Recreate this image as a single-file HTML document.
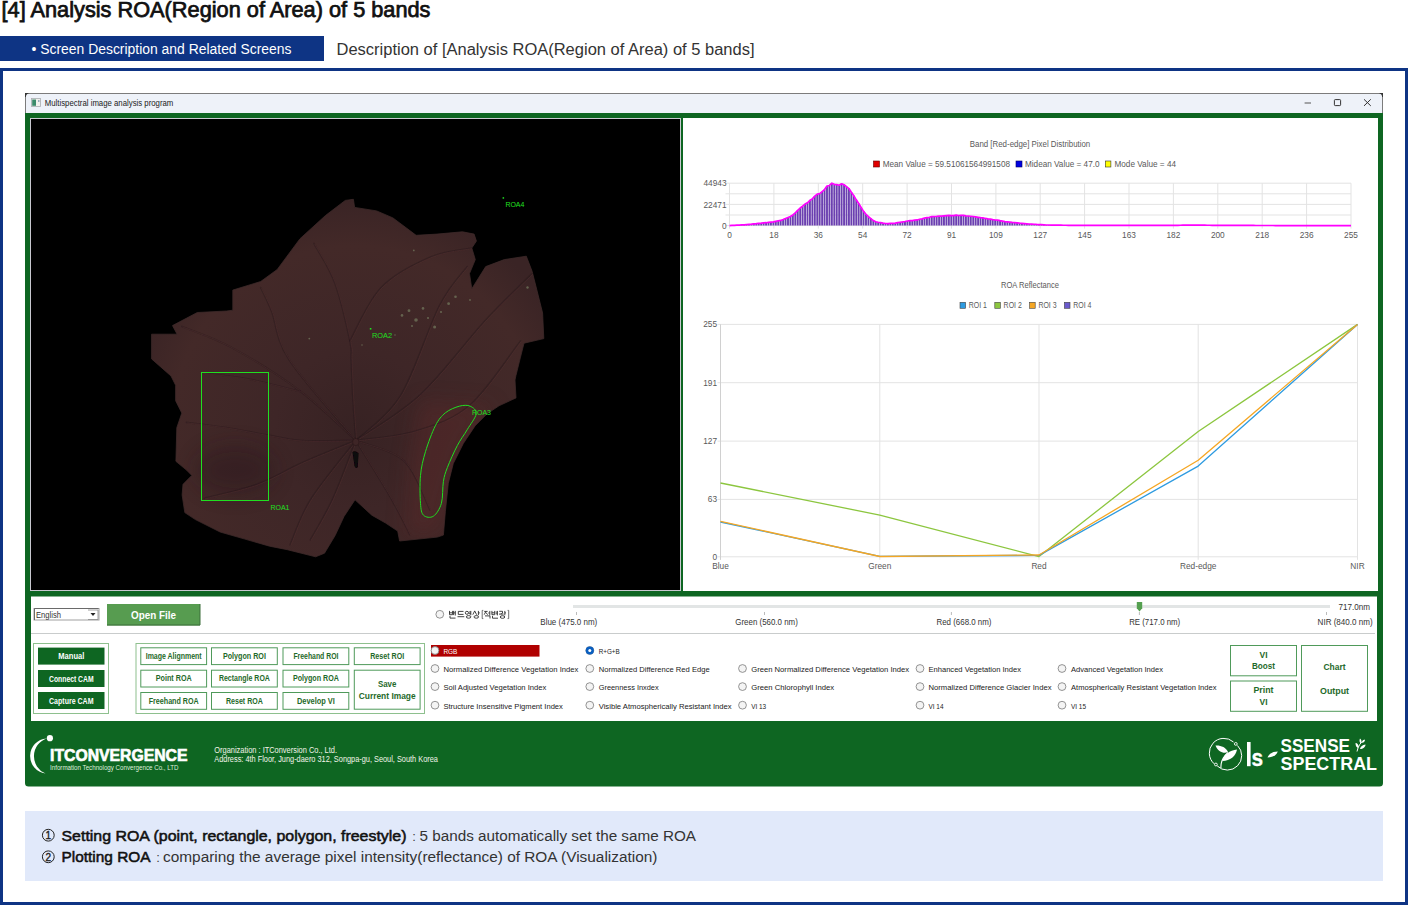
<!DOCTYPE html><html><head><meta charset="utf-8"><style>*{margin:0;padding:0}html,body{width:1408px;height:905px;overflow:hidden;background:#fff}svg{position:absolute;left:0;top:0;display:block}text{font-family:"Liberation Sans",sans-serif}</style></head><body><svg width="1408" height="905" viewBox="0 0 1408 905"><text x="1.5" y="17.3" font-size="21.5" fill="#111" textLength="429" lengthAdjust="spacingAndGlyphs" stroke="#111" stroke-width="0.75">[4] Analysis ROA(Region of Area) of 5 bands</text>
<rect x="0" y="36" width="324" height="25" fill="#0e3484"/>
<text x="31.5" y="53.9" font-size="13.8" fill="#fff" textLength="260" lengthAdjust="spacingAndGlyphs">• Screen Description and Related Screens</text>
<text x="336.5" y="54.7" font-size="16" fill="#333" textLength="418" lengthAdjust="spacingAndGlyphs">Description of [Analysis ROA(Region of Area) of 5 bands]</text>
<rect x="1.5" y="69.5" width="1405" height="834" fill="none" stroke="#0e3484" stroke-width="3"/>
<path d="M25,113 L25,96 Q25,93 28,93 L1380,93 Q1383,93 1383,96 L1383,113 Z" fill="#eef2f9"/>
<path d="M25.5,125 L25.5,93.5 L1382.5,93.5 L1382.5,113" fill="none" stroke="#7c7c7c" stroke-width="1"/>
<path d="M25,93 L29,93 Q26,94 25.8,97 L25,97 Z M1383,93 L1379,93 Q1382,94 1382.2,97 L1383,97 Z" fill="#333"/>
<path d="M25,113 L1383,113 L1383,783 Q1383,786.5 1379.5,786.5 L28.5,786.5 Q25,786.5 25,783 Z" fill="#0e6622"/>
<rect x="31.5" y="98.5" width="9" height="8" fill="#f0f0ec" stroke="#a8acb0" stroke-width="0.8"/>
<rect x="32.2" y="99.5" width="3.8" height="6.3" fill="#3a8a6a"/>
<rect x="38" y="100" width="1.5" height="2" fill="#9ab"/>
<text x="44.8" y="106" font-size="8.6" fill="#1a1a1a" textLength="128.5" lengthAdjust="spacingAndGlyphs">Multispectral image analysis program</text>
<line x1="1304.6" y1="103" x2="1311" y2="103" stroke="#555" stroke-width="1"/>
<rect x="1334.4" y="99.6" width="6.2" height="6" rx="0.8" fill="none" stroke="#333" stroke-width="1"/>
<path d="M1364,99.3 L1370.8,105.9 M1370.8,99.3 L1364,105.9" stroke="#333" stroke-width="1"/>
<rect x="30.5" y="118.5" width="650" height="472" fill="#000" stroke="#c8c8d0" stroke-width="1"/>
<defs><radialGradient id="lg" cx="355" cy="430" r="230" gradientUnits="userSpaceOnUse"><stop offset="0" stop-color="#372223"/><stop offset="0.35" stop-color="#3e2627"/><stop offset="0.8" stop-color="#432928"/><stop offset="1" stop-color="#3a2425"/></radialGradient><linearGradient id="rg" x1="0" y1="0" x2="1" y2="0"><stop offset="0" stop-color="#5a2a2a" stop-opacity="0"/><stop offset="1" stop-color="#6a2e2c" stop-opacity="0.55"/></linearGradient><filter id="bl" x="-50%" y="-50%" width="200%" height="200%"><feGaussianBlur stdDeviation="10"/></filter><filter id="bl2"><feGaussianBlur stdDeviation="0.35"/></filter><clipPath id="imgclip"><rect x="31" y="119" width="649" height="471"/></clipPath><clipPath id="leafclip"><polygon points="345.3,200.4 353.4,199.3 354.6,207.4 376.6,210.9 392.9,217.9 406.8,228.3 416.1,235.3 437,234.1 462.5,231.8 474.1,234.1 476.4,241.1 471.8,248 475.3,259.6 469.5,273.6 471.8,288.7 485.7,266.6 504.3,259.6 526.3,256.2 532.1,271.3 536.8,289.8 542.6,313 543.8,338.6 524,343.2 520.5,357.1 515.9,375.7 515,380 516,397.9 499,405.8 487.1,413.8 475.2,425.7 463.3,443.6 453.3,463.5 448.3,483.4 445.4,511.2 443.4,535.1 437.4,537.1 399.6,541 397.7,531.1 385.7,523.1 371.8,515.2 355,499.8 344,516.5 335.1,535.6 324.5,553.2 315.6,556.8 287.3,549.7 269.6,546.2 244.9,539.1 220.1,532 195.4,519.6 184.8,512.6 182.1,494.9 183,484.3 191.8,475.4 186.5,470.1 175.9,461.3 176.8,427.7 181.8,413.1 175.6,400.7 175.6,385.2 171,376 151.6,358.9 151.6,334.2 177.1,334.2 172.5,325.6 197.3,312.5 226.7,311 232.8,310.2 232.8,290.1 260.7,281.5 277.2,269.5 300,238.7 325.5,215.5"/></clipPath></defs>
<g clip-path="url(#imgclip)">
<polygon points="345.3,200.4 353.4,199.3 354.6,207.4 376.6,210.9 392.9,217.9 406.8,228.3 416.1,235.3 437,234.1 462.5,231.8 474.1,234.1 476.4,241.1 471.8,248 475.3,259.6 469.5,273.6 471.8,288.7 485.7,266.6 504.3,259.6 526.3,256.2 532.1,271.3 536.8,289.8 542.6,313 543.8,338.6 524,343.2 520.5,357.1 515.9,375.7 515,380 516,397.9 499,405.8 487.1,413.8 475.2,425.7 463.3,443.6 453.3,463.5 448.3,483.4 445.4,511.2 443.4,535.1 437.4,537.1 399.6,541 397.7,531.1 385.7,523.1 371.8,515.2 355,499.8 344,516.5 335.1,535.6 324.5,553.2 315.6,556.8 287.3,549.7 269.6,546.2 244.9,539.1 220.1,532 195.4,519.6 184.8,512.6 182.1,494.9 183,484.3 191.8,475.4 186.5,470.1 175.9,461.3 176.8,427.7 181.8,413.1 175.6,400.7 175.6,385.2 171,376 151.6,358.9 151.6,334.2 177.1,334.2 172.5,325.6 197.3,312.5 226.7,311 232.8,310.2 232.8,290.1 260.7,281.5 277.2,269.5 300,238.7 325.5,215.5" fill="url(#lg)" stroke="#3e2a2a" stroke-width="0.8"/>
<g clip-path="url(#leafclip)">
<path d="M420,400 L495,405 L465,445 L448,500 L440,535 L405,535 L410,460 Z" fill="#632b2b" opacity="0.35" filter="url(#bl)"/>
<ellipse cx="235" cy="470" rx="40" ry="25" fill="#2a181a" opacity="0.4" filter="url(#bl)"/>
<path d="M355.8,440.5 C355.3,433.8 353.8,413.4 353.0,400.0 C352.2,386.6 351.7,369.9 351.2,360.0 C350.7,350.1 352.6,353.8 349.9,340.9 C347.2,328.0 340.8,299.1 334.8,282.9 C328.8,266.6 317.4,250.0 313.9,243.4" fill="none" stroke="#24151a" stroke-width="1.6" opacity="0.38" stroke-linecap="round" filter="url(#bl2)"/>
<path d="M356.6,441.0 C356.1,434.2 354.6,413.9 353.8,400.5 C353.0,387.1 352.5,370.4 352.0,360.5 C351.5,350.6 353.4,354.2 350.7,341.4 C348.0,328.5 341.6,299.6 335.6,283.4 C329.6,267.1 318.2,250.5 314.7,243.9" fill="none" stroke="#64383a" stroke-width="0.7" opacity="0.45" stroke-linejoin="round"/>
<path d="M349.9,340.9 C355.1,332.0 367.8,301.4 381.2,287.5 C394.6,273.6 414.9,263.9 430.0,257.3 C445.1,250.7 464.8,249.6 471.8,248.0" fill="none" stroke="#24151a" stroke-width="1.6" opacity="0.38" stroke-linecap="round" filter="url(#bl2)"/>
<path d="M350.7,341.4 C355.9,332.5 368.6,301.9 382.0,288.0 C395.4,274.1 415.7,264.4 430.8,257.8 C445.9,251.2 465.6,250.1 472.6,248.5" fill="none" stroke="#64383a" stroke-width="0.7" opacity="0.45" stroke-linejoin="round"/>
<path d="M355.8,440.5 C363.3,433.0 386.7,418.0 400.6,395.6 C414.5,373.2 428.2,327.5 439.3,306.0 C450.4,284.5 462.5,273.2 467.1,266.6" fill="none" stroke="#24151a" stroke-width="1.6" opacity="0.38" stroke-linecap="round" filter="url(#bl2)"/>
<path d="M356.6,441.0 C364.1,433.5 387.5,418.5 401.4,396.1 C415.3,373.7 429.0,328.0 440.1,306.5 C451.2,285.0 463.3,273.7 467.9,267.1" fill="none" stroke="#64383a" stroke-width="0.7" opacity="0.45" stroke-linejoin="round"/>
<path d="M355.8,440.5 C366.6,432.8 399.1,414.4 420.7,394.3 C442.3,374.2 467.1,340.1 485.7,320.0 C504.3,299.9 524.4,281.3 532.1,273.6" fill="none" stroke="#24151a" stroke-width="1.6" opacity="0.38" stroke-linecap="round" filter="url(#bl2)"/>
<path d="M356.6,441.0 C367.4,433.3 399.9,414.9 421.5,394.8 C443.1,374.7 467.9,340.6 486.5,320.5 C505.1,300.4 525.2,281.8 532.9,274.1" fill="none" stroke="#64383a" stroke-width="0.7" opacity="0.45" stroke-linejoin="round"/>
<path d="M355.8,440.5 C365.8,438.9 397.0,436.9 416.0,431.0 C435.0,425.1 452.6,420.0 470.0,405.0 C487.4,390.0 512.1,351.6 520.5,340.9" fill="none" stroke="#24151a" stroke-width="1.6" opacity="0.38" stroke-linecap="round" filter="url(#bl2)"/>
<path d="M356.6,441.0 C366.6,439.4 397.8,437.4 416.8,431.5 C435.8,425.6 453.4,420.5 470.8,405.5 C488.2,390.5 512.9,352.1 521.3,341.4" fill="none" stroke="#64383a" stroke-width="0.7" opacity="0.45" stroke-linejoin="round"/>
<path d="M355.8,440.5 C346.8,440.5 316.5,441.4 301.5,440.5 C286.5,439.6 278.4,436.9 266.0,434.8 C253.6,432.7 240.4,429.8 227.2,427.7 C213.9,425.6 193.3,423.3 186.5,422.4" fill="none" stroke="#24151a" stroke-width="1.6" opacity="0.38" stroke-linecap="round" filter="url(#bl2)"/>
<path d="M356.6,441.0 C347.6,441.0 317.3,441.9 302.3,441.0 C287.3,440.1 279.2,437.4 266.8,435.3 C254.4,433.2 241.2,430.3 228.0,428.2 C214.8,426.1 194.1,423.8 187.3,422.9" fill="none" stroke="#64383a" stroke-width="0.7" opacity="0.45" stroke-linejoin="round"/>
<path d="M355.8,440.5 C346.8,444.2 317.9,455.7 301.5,463.0 C285.1,470.3 273.5,478.4 257.3,484.3 C241.1,490.2 213.0,496.0 204.2,498.4" fill="none" stroke="#24151a" stroke-width="1.6" opacity="0.38" stroke-linecap="round" filter="url(#bl2)"/>
<path d="M356.6,441.0 C347.6,444.8 318.7,456.2 302.3,463.5 C285.9,470.8 274.3,478.9 258.1,484.8 C241.9,490.7 213.8,496.5 205.0,498.9" fill="none" stroke="#64383a" stroke-width="0.7" opacity="0.45" stroke-linejoin="round"/>
<path d="M355.8,440.5 C351.9,450.2 340.2,482.4 332.6,499.0 C325.0,515.6 314.0,533.2 310.3,540.0" fill="none" stroke="#24151a" stroke-width="1.6" opacity="0.38" stroke-linecap="round" filter="url(#bl2)"/>
<path d="M356.6,441.0 C352.7,450.8 341.0,482.9 333.4,499.5 C325.8,516.1 314.8,533.7 311.1,540.5" fill="none" stroke="#64383a" stroke-width="0.7" opacity="0.45" stroke-linejoin="round"/>
<path d="M355.8,440.5 C348.3,450.2 322.0,481.6 311.0,499.0 C300.0,516.4 293.5,537.3 290.0,545.0" fill="none" stroke="#24151a" stroke-width="1.6" opacity="0.38" stroke-linecap="round" filter="url(#bl2)"/>
<path d="M356.6,441.0 C349.1,450.8 322.8,482.1 311.8,499.5 C300.8,516.9 294.3,537.8 290.8,545.5" fill="none" stroke="#64383a" stroke-width="0.7" opacity="0.45" stroke-linejoin="round"/>
<path d="M355.8,440.5 C346.5,432.2 320.5,406.4 300.0,391.0 C279.5,375.6 252.5,358.9 232.8,348.1 C213.1,337.3 190.3,330.0 181.8,326.4" fill="none" stroke="#24151a" stroke-width="1.6" opacity="0.38" stroke-linecap="round" filter="url(#bl2)"/>
<path d="M356.6,441.0 C347.3,432.8 321.3,406.9 300.8,391.5 C280.3,376.1 253.3,359.4 233.6,348.6 C213.9,337.8 191.1,330.5 182.6,326.9" fill="none" stroke="#64383a" stroke-width="0.7" opacity="0.45" stroke-linejoin="round"/>
<path d="M355.8,440.5 C344.7,427.1 303.4,381.6 289.3,360.0 C275.2,338.4 276.3,323.1 271.5,311.0 C266.7,298.9 262.5,291.6 260.7,287.7" fill="none" stroke="#24151a" stroke-width="1.6" opacity="0.38" stroke-linecap="round" filter="url(#bl2)"/>
<path d="M356.6,441.0 C345.5,427.6 304.2,382.1 290.1,360.5 C276.1,338.9 277.1,323.6 272.3,311.5 C267.5,299.4 263.3,292.1 261.5,288.2" fill="none" stroke="#64383a" stroke-width="0.7" opacity="0.45" stroke-linejoin="round"/>
<path d="M300.0,391.4 C291.4,389.3 264.7,382.1 248.3,379.0 C232.0,375.9 209.6,373.8 201.9,372.8" fill="none" stroke="#24151a" stroke-width="1.6" opacity="0.38" stroke-linecap="round" filter="url(#bl2)"/>
<path d="M300.8,391.9 C292.2,389.8 265.5,382.6 249.1,379.5 C232.8,376.4 210.4,374.3 202.7,373.3" fill="none" stroke="#64383a" stroke-width="0.7" opacity="0.45" stroke-linejoin="round"/>
<path d="M355.8,440.5 C361.7,450.2 382.4,483.2 391.4,499.0 C400.4,514.8 406.9,529.0 410.0,535.0" fill="none" stroke="#24151a" stroke-width="1.6" opacity="0.38" stroke-linecap="round" filter="url(#bl2)"/>
<path d="M356.6,441.0 C362.5,450.8 383.2,483.8 392.2,499.5 C401.2,515.2 407.7,529.5 410.8,535.5" fill="none" stroke="#64383a" stroke-width="0.7" opacity="0.45" stroke-linejoin="round"/>
<path d="M355.8,440.5 C363.8,443.9 391.4,449.0 403.8,460.6 C416.2,472.2 425.6,501.8 430.0,510.0" fill="none" stroke="#24151a" stroke-width="1.6" opacity="0.38" stroke-linecap="round" filter="url(#bl2)"/>
<path d="M356.6,441.0 C364.6,444.4 392.2,449.5 404.6,461.1 C417.0,472.7 426.4,502.3 430.8,510.5" fill="none" stroke="#64383a" stroke-width="0.7" opacity="0.45" stroke-linejoin="round"/>
<circle cx="416" cy="320" r="1.8" fill="#849470" opacity="0.55"/>
<circle cx="409" cy="310.7" r="1.4" fill="#849470" opacity="0.55"/>
<circle cx="423" cy="308.4" r="1.3" fill="#849470" opacity="0.55"/>
<circle cx="402" cy="315.4" r="1.3" fill="#849470" opacity="0.55"/>
<circle cx="434.6" cy="327" r="1.5" fill="#849470" opacity="0.55"/>
<circle cx="448.6" cy="303.7" r="1.4" fill="#849470" opacity="0.55"/>
<circle cx="455.5" cy="296.8" r="1.3" fill="#849470" opacity="0.55"/>
<circle cx="441" cy="312" r="1.1" fill="#849470" opacity="0.55"/>
<circle cx="428" cy="318" r="1.1" fill="#849470" opacity="0.55"/>
<circle cx="412" cy="326" r="1" fill="#849470" opacity="0.55"/>
<circle cx="309.3" cy="338.6" r="0.9" fill="#849470" opacity="0.55"/>
<circle cx="527.5" cy="287.5" r="1.2" fill="#849470" opacity="0.55"/>
<circle cx="413.8" cy="250.4" r="0.9" fill="#849470" opacity="0.55"/>
<circle cx="395" cy="335" r="0.8" fill="#849470" opacity="0.55"/>
<circle cx="362" cy="345" r="0.8" fill="#849470" opacity="0.55"/>
<circle cx="470" cy="300" r="0.9" fill="#849470" opacity="0.55"/>
<ellipse cx="355.8" cy="442" rx="3.2" ry="3.6" fill="#3e2526" stroke="#2a1819" stroke-width="0.6"/>
<path d="M352.5,452 Q355,450 358.5,453 L357.8,467 Q356,469.5 354.5,466 Z" fill="#0c0708" filter="url(#bl2)"/>
</g></g>
<rect x="201.5" y="372.5" width="67" height="128" fill="none" stroke="#20e020" stroke-width="1"/>
<text x="270.5" y="510" font-size="7.6" fill="#20e020" textLength="19" lengthAdjust="spacingAndGlyphs">ROA1</text>
<path d="M470.2,406.2 C473.0,407.5 476.7,409.9 476.2,413.8 C475.7,417.7 470.3,424.4 467.2,429.7 C464.1,435.0 460.6,439.3 457.3,445.6 C454.0,451.9 449.7,461.5 447.4,467.5 C445.1,473.5 444.4,475.4 443.4,481.4 C442.4,487.4 443.1,497.5 441.4,503.3 C439.7,509.1 436.4,514.2 433.4,516.2 C430.4,518.2 425.6,517.4 423.5,515.2 C421.4,513.1 421.0,509.9 420.5,503.3 C420.0,496.7 419.7,484.0 420.5,475.4 C421.3,466.8 423.0,459.9 425.5,451.6 C428.0,443.3 432.1,432.2 435.4,425.7 C438.7,419.2 441.4,416.1 445.4,412.8 C449.4,409.6 455.2,407.3 459.3,406.2 C463.4,405.1 467.4,404.9 470.2,406.2Z" fill="none" stroke="#20e020" stroke-width="1"/>
<text x="472" y="415" font-size="7.6" fill="#20e020" textLength="19" lengthAdjust="spacingAndGlyphs">ROA3</text>
<rect x="369.8" y="328" width="1.6" height="1.6" fill="#20e020"/>
<text x="372" y="338" font-size="7.6" fill="#20e020" textLength="20" lengthAdjust="spacingAndGlyphs">ROA2</text>
<rect x="502.6" y="197.2" width="1.5" height="1.5" fill="#20e020"/>
<text x="505.4" y="207" font-size="7.6" fill="#20e020" textLength="19" lengthAdjust="spacingAndGlyphs">ROA4</text>
<rect x="683" y="118" width="695" height="473" fill="#fff"/>
<rect x="31" y="596.5" width="1346" height="124.5" fill="#fff"/>
<rect x="25" y="811" width="1358" height="70" fill="#e1e9fa"/>
<circle cx="48.3" cy="835.2" r="5.9" fill="none" stroke="#222" stroke-width="1"/>
<text x="48.3" y="838.9" font-size="10" fill="#222" text-anchor="middle" stroke="#222" stroke-width="0.35">1</text>
<text x="61.5" y="840.6" font-size="15.5" fill="#111" textLength="345" lengthAdjust="spacingAndGlyphs" stroke="#111" stroke-width="0.55">Setting ROA (point, rectangle, polygon, freestyle)</text>
<text x="412.3" y="840.6" font-size="13" fill="#444">:</text>
<text x="419.5" y="840.6" font-size="15.5" fill="#333" textLength="276.5" lengthAdjust="spacingAndGlyphs">5 bands automatically set the same ROA</text>
<circle cx="48.3" cy="856.8" r="5.9" fill="none" stroke="#222" stroke-width="1"/>
<text x="48.3" y="860.5" font-size="10" fill="#222" text-anchor="middle" stroke="#222" stroke-width="0.35">2</text>
<text x="61.5" y="862.2" font-size="15.5" fill="#111" textLength="89" lengthAdjust="spacingAndGlyphs" stroke="#111" stroke-width="0.55">Plotting ROA</text>
<text x="156.3" y="862.2" font-size="13" fill="#444">:</text>
<text x="163" y="862.2" font-size="15.5" fill="#333" textLength="494.5" lengthAdjust="spacingAndGlyphs">comparing the average pixel intensity(reflectance) of ROA (Visualization)</text>
<text x="1030" y="146.8" font-size="8.3" fill="#595959" text-anchor="middle" textLength="120.5" lengthAdjust="spacingAndGlyphs">Band [Red-edge] Pixel Distribution</text>
<rect x="873.5" y="161" width="6" height="6" fill="#e00000" stroke="#600" stroke-width="0.6"/>
<text x="882.7" y="167" font-size="8.3" fill="#595959" textLength="127.3" lengthAdjust="spacingAndGlyphs">Mean Value = 59.51061564991508</text>
<rect x="1016" y="161" width="6" height="6" fill="#0000e0" stroke="#006" stroke-width="0.6"/>
<text x="1025" y="167" font-size="8.3" fill="#595959" textLength="74.5" lengthAdjust="spacingAndGlyphs">Midean Value = 47.0</text>
<rect x="1105.3" y="161" width="5.6" height="6" fill="#ffff00" stroke="#333" stroke-width="0.6"/>
<text x="1114.5" y="167" font-size="8.3" fill="#595959" textLength="61.5" lengthAdjust="spacingAndGlyphs">Mode Value = 44</text>
<line x1="725.5" y1="183.2" x2="1351" y2="183.2" stroke="#e3e3e3" stroke-width="1"/>
<line x1="725.5" y1="193.8" x2="1351" y2="193.8" stroke="#e3e3e3" stroke-width="1"/>
<line x1="725.5" y1="204.4" x2="1351" y2="204.4" stroke="#e3e3e3" stroke-width="1"/>
<line x1="725.5" y1="215.0" x2="1351" y2="215.0" stroke="#e3e3e3" stroke-width="1"/>
<line x1="725.5" y1="225.6" x2="1351" y2="225.6" stroke="#e3e3e3" stroke-width="1"/>
<line x1="729.5" y1="183.2" x2="729.5" y2="228.6" stroke="#e3e3e3" stroke-width="1"/>
<text x="729.5" y="238.3" font-size="8.3" fill="#595959" text-anchor="middle">0</text>
<line x1="773.9" y1="183.2" x2="773.9" y2="228.6" stroke="#e3e3e3" stroke-width="1"/>
<text x="773.9" y="238.3" font-size="8.3" fill="#595959" text-anchor="middle">18</text>
<line x1="818.3" y1="183.2" x2="818.3" y2="228.6" stroke="#e3e3e3" stroke-width="1"/>
<text x="818.3" y="238.3" font-size="8.3" fill="#595959" text-anchor="middle">36</text>
<line x1="862.7" y1="183.2" x2="862.7" y2="228.6" stroke="#e3e3e3" stroke-width="1"/>
<text x="862.7" y="238.3" font-size="8.3" fill="#595959" text-anchor="middle">54</text>
<line x1="907.1" y1="183.2" x2="907.1" y2="228.6" stroke="#e3e3e3" stroke-width="1"/>
<text x="907.1" y="238.3" font-size="8.3" fill="#595959" text-anchor="middle">72</text>
<line x1="951.5" y1="183.2" x2="951.5" y2="228.6" stroke="#e3e3e3" stroke-width="1"/>
<text x="951.5" y="238.3" font-size="8.3" fill="#595959" text-anchor="middle">91</text>
<line x1="995.9" y1="183.2" x2="995.9" y2="228.6" stroke="#e3e3e3" stroke-width="1"/>
<text x="995.9" y="238.3" font-size="8.3" fill="#595959" text-anchor="middle">109</text>
<line x1="1040.2" y1="183.2" x2="1040.2" y2="228.6" stroke="#e3e3e3" stroke-width="1"/>
<text x="1040.2" y="238.3" font-size="8.3" fill="#595959" text-anchor="middle">127</text>
<line x1="1084.6" y1="183.2" x2="1084.6" y2="228.6" stroke="#e3e3e3" stroke-width="1"/>
<text x="1084.6" y="238.3" font-size="8.3" fill="#595959" text-anchor="middle">145</text>
<line x1="1129.0" y1="183.2" x2="1129.0" y2="228.6" stroke="#e3e3e3" stroke-width="1"/>
<text x="1129.0" y="238.3" font-size="8.3" fill="#595959" text-anchor="middle">163</text>
<line x1="1173.4" y1="183.2" x2="1173.4" y2="228.6" stroke="#e3e3e3" stroke-width="1"/>
<text x="1173.4" y="238.3" font-size="8.3" fill="#595959" text-anchor="middle">182</text>
<line x1="1217.8" y1="183.2" x2="1217.8" y2="228.6" stroke="#e3e3e3" stroke-width="1"/>
<text x="1217.8" y="238.3" font-size="8.3" fill="#595959" text-anchor="middle">200</text>
<line x1="1262.2" y1="183.2" x2="1262.2" y2="228.6" stroke="#e3e3e3" stroke-width="1"/>
<text x="1262.2" y="238.3" font-size="8.3" fill="#595959" text-anchor="middle">218</text>
<line x1="1306.6" y1="183.2" x2="1306.6" y2="228.6" stroke="#e3e3e3" stroke-width="1"/>
<text x="1306.6" y="238.3" font-size="8.3" fill="#595959" text-anchor="middle">236</text>
<line x1="1351.0" y1="183.2" x2="1351.0" y2="228.6" stroke="#e3e3e3" stroke-width="1"/>
<text x="1351.0" y="238.3" font-size="8.3" fill="#595959" text-anchor="middle">255</text>
<text x="726.5" y="186.3" font-size="8.3" fill="#595959" text-anchor="end">44943</text>
<text x="726.5" y="207.8" font-size="8.3" fill="#595959" text-anchor="end">22471</text>
<text x="726.5" y="229" font-size="8.3" fill="#595959" text-anchor="end">0</text>
<path d="M733.42,225.6h1.9v-0.25h-1.9zM735.86,225.6h1.9v-0.39h-1.9zM738.30,225.6h1.9v-0.52h-1.9zM740.74,225.6h1.9v-0.63h-1.9zM743.17,225.6h1.9v-0.75h-1.9zM745.61,225.6h1.9v-0.97h-1.9zM748.05,225.6h1.9v-1.18h-1.9zM750.49,225.6h1.9v-1.42h-1.9zM752.92,225.6h1.9v-1.75h-1.9zM755.36,225.6h1.9v-1.94h-1.9zM757.80,225.6h1.9v-2.24h-1.9zM760.23,225.6h1.9v-2.44h-1.9zM762.67,225.6h1.9v-2.71h-1.9zM765.11,225.6h1.9v-2.88h-1.9zM767.55,225.6h1.9v-3.22h-1.9zM769.98,225.6h1.9v-3.52h-1.9zM772.42,225.6h1.9v-3.69h-1.9zM774.86,225.6h1.9v-4.29h-1.9zM777.30,225.6h1.9v-4.81h-1.9zM779.73,225.6h1.9v-5.16h-1.9zM782.17,225.6h1.9v-6.04h-1.9zM784.61,225.6h1.9v-7.11h-1.9zM787.04,225.6h1.9v-8.09h-1.9zM789.48,225.6h1.9v-9.05h-1.9zM791.92,225.6h1.9v-10.66h-1.9zM794.36,225.6h1.9v-12.73h-1.9zM796.79,225.6h1.9v-15.26h-1.9zM799.23,225.6h1.9v-17.61h-1.9zM801.67,225.6h1.9v-19.37h-1.9zM804.10,225.6h1.9v-21.56h-1.9zM806.54,225.6h1.9v-22.79h-1.9zM808.98,225.6h1.9v-25.31h-1.9zM811.42,225.6h1.9v-26.74h-1.9zM813.85,225.6h1.9v-29.55h-1.9zM816.29,225.6h1.9v-31.46h-1.9zM818.73,225.6h1.9v-31.94h-1.9zM821.17,225.6h1.9v-33.93h-1.9zM823.60,225.6h1.9v-36.02h-1.9zM826.04,225.6h1.9v-39.60h-1.9zM828.48,225.6h1.9v-40.13h-1.9zM830.91,225.6h1.9v-42.37h-1.9zM833.35,225.6h1.9v-41.25h-1.9zM835.79,225.6h1.9v-40.95h-1.9zM838.23,225.6h1.9v-40.33h-1.9zM840.66,225.6h1.9v-41.86h-1.9zM843.10,225.6h1.9v-40.86h-1.9zM845.54,225.6h1.9v-38.90h-1.9zM847.98,225.6h1.9v-37.02h-1.9zM850.41,225.6h1.9v-33.33h-1.9zM852.85,225.6h1.9v-29.89h-1.9zM855.29,225.6h1.9v-25.78h-1.9zM857.72,225.6h1.9v-22.20h-1.9zM860.16,225.6h1.9v-18.16h-1.9zM862.60,225.6h1.9v-14.25h-1.9zM865.04,225.6h1.9v-11.36h-1.9zM867.47,225.6h1.9v-8.89h-1.9zM869.91,225.6h1.9v-6.99h-1.9zM872.35,225.6h1.9v-5.01h-1.9zM874.79,225.6h1.9v-3.89h-1.9zM877.22,225.6h1.9v-3.32h-1.9zM879.66,225.6h1.9v-2.97h-1.9zM882.10,225.6h1.9v-2.46h-1.9zM884.53,225.6h1.9v-2.09h-1.9zM886.97,225.6h1.9v-2.06h-1.9zM889.41,225.6h1.9v-2.17h-1.9zM891.85,225.6h1.9v-2.22h-1.9zM894.28,225.6h1.9v-2.50h-1.9zM896.72,225.6h1.9v-3.02h-1.9zM899.16,225.6h1.9v-3.35h-1.9zM901.60,225.6h1.9v-3.69h-1.9zM904.03,225.6h1.9v-4.12h-1.9zM906.47,225.6h1.9v-4.62h-1.9zM908.91,225.6h1.9v-4.97h-1.9zM911.34,225.6h1.9v-5.04h-1.9zM913.78,225.6h1.9v-5.53h-1.9zM916.22,225.6h1.9v-5.65h-1.9zM918.66,225.6h1.9v-6.32h-1.9zM921.09,225.6h1.9v-6.69h-1.9zM923.53,225.6h1.9v-7.43h-1.9zM925.97,225.6h1.9v-8.00h-1.9zM928.40,225.6h1.9v-8.29h-1.9zM930.84,225.6h1.9v-9.06h-1.9zM933.28,225.6h1.9v-9.10h-1.9zM935.72,225.6h1.9v-9.14h-1.9zM938.15,225.6h1.9v-9.60h-1.9zM940.59,225.6h1.9v-9.44h-1.9zM943.03,225.6h1.9v-9.70h-1.9zM945.47,225.6h1.9v-9.99h-1.9zM947.90,225.6h1.9v-10.18h-1.9zM950.34,225.6h1.9v-9.96h-1.9zM952.78,225.6h1.9v-9.95h-1.9zM955.21,225.6h1.9v-10.52h-1.9zM957.65,225.6h1.9v-10.08h-1.9zM960.09,225.6h1.9v-10.33h-1.9zM962.53,225.6h1.9v-10.15h-1.9zM964.96,225.6h1.9v-9.70h-1.9zM967.40,225.6h1.9v-9.61h-1.9zM969.84,225.6h1.9v-9.37h-1.9zM972.28,225.6h1.9v-9.07h-1.9zM974.71,225.6h1.9v-8.67h-1.9zM977.15,225.6h1.9v-8.28h-1.9zM979.59,225.6h1.9v-7.94h-1.9zM982.02,225.6h1.9v-7.71h-1.9zM984.46,225.6h1.9v-7.14h-1.9zM986.90,225.6h1.9v-6.74h-1.9zM989.34,225.6h1.9v-6.48h-1.9zM991.77,225.6h1.9v-5.92h-1.9zM994.21,225.6h1.9v-5.58h-1.9zM996.65,225.6h1.9v-5.42h-1.9zM999.09,225.6h1.9v-4.90h-1.9zM1001.52,225.6h1.9v-4.53h-1.9zM1003.96,225.6h1.9v-4.02h-1.9zM1006.40,225.6h1.9v-3.74h-1.9zM1008.83,225.6h1.9v-3.51h-1.9zM1011.27,225.6h1.9v-3.15h-1.9zM1013.71,225.6h1.9v-3.02h-1.9zM1016.15,225.6h1.9v-2.78h-1.9zM1018.58,225.6h1.9v-2.45h-1.9zM1021.02,225.6h1.9v-2.29h-1.9zM1023.46,225.6h1.9v-2.02h-1.9zM1025.90,225.6h1.9v-1.80h-1.9zM1028.33,225.6h1.9v-1.62h-1.9zM1030.77,225.6h1.9v-1.51h-1.9zM1033.21,225.6h1.9v-1.37h-1.9zM1035.64,225.6h1.9v-1.17h-1.9zM1038.08,225.6h1.9v-1.03h-1.9zM1040.52,225.6h1.9v-0.92h-1.9zM1042.96,225.6h1.9v-0.79h-1.9zM1045.39,225.6h1.9v-0.62h-1.9zM1047.83,225.6h1.9v-0.59h-1.9zM1050.27,225.6h1.9v-0.56h-1.9zM1052.70,225.6h1.9v-0.51h-1.9zM1055.14,225.6h1.9v-0.48h-1.9zM1057.58,225.6h1.9v-0.44h-1.9zM1060.02,225.6h1.9v-0.40h-1.9zM1062.45,225.6h1.9v-0.37h-1.9zM1064.89,225.6h1.9v-0.33h-1.9zM1067.33,225.6h1.9v-0.29h-1.9zM1069.77,225.6h1.9v-0.26h-1.9zM1072.20,225.6h1.9v-0.25h-1.9zM1074.64,225.6h1.9v-0.25h-1.9zM1077.08,225.6h1.9v-0.25h-1.9zM1079.51,225.6h1.9v-0.24h-1.9zM1081.95,225.6h1.9v-0.24h-1.9zM1084.39,225.6h1.9v-0.25h-1.9zM1086.83,225.6h1.9v-0.24h-1.9zM1089.26,225.6h1.9v-0.23h-1.9zM1091.70,225.6h1.9v-0.23h-1.9zM1094.14,225.6h1.9v-0.24h-1.9zM1096.58,225.6h1.9v-0.23h-1.9zM1099.01,225.6h1.9v-0.23h-1.9zM1101.45,225.6h1.9v-0.22h-1.9zM1103.89,225.6h1.9v-0.23h-1.9zM1106.32,225.6h1.9v-0.22h-1.9zM1108.76,225.6h1.9v-0.23h-1.9zM1111.20,225.6h1.9v-0.21h-1.9zM1113.64,225.6h1.9v-0.21h-1.9zM1116.07,225.6h1.9v-0.22h-1.9zM1118.51,225.6h1.9v-0.22h-1.9zM1120.95,225.6h1.9v-0.21h-1.9zM1123.39,225.6h1.9v-0.20h-1.9zM1125.82,225.6h1.9v-0.20h-1.9zM1128.26,225.6h1.9v-0.20h-1.9zM1133.13,225.6h1.9v-0.20h-1.9zM1135.57,225.6h1.9v-0.20h-1.9zM1169.69,225.6h1.9v-0.20h-1.9zM1172.13,225.6h1.9v-0.24h-1.9zM1174.57,225.6h1.9v-0.27h-1.9zM1177.00,225.6h1.9v-0.30h-1.9zM1179.44,225.6h1.9v-0.35h-1.9zM1181.88,225.6h1.9v-0.38h-1.9zM1184.32,225.6h1.9v-0.42h-1.9zM1186.75,225.6h1.9v-0.44h-1.9zM1189.19,225.6h1.9v-0.49h-1.9zM1191.63,225.6h1.9v-0.52h-1.9zM1194.07,225.6h1.9v-0.48h-1.9zM1196.50,225.6h1.9v-0.46h-1.9zM1198.94,225.6h1.9v-0.44h-1.9zM1201.38,225.6h1.9v-0.41h-1.9zM1203.81,225.6h1.9v-0.38h-1.9zM1206.25,225.6h1.9v-0.35h-1.9zM1208.69,225.6h1.9v-0.33h-1.9zM1211.13,225.6h1.9v-0.30h-1.9zM1213.56,225.6h1.9v-0.27h-1.9zM1216.00,225.6h1.9v-0.26h-1.9zM1218.44,225.6h1.9v-0.24h-1.9zM1220.88,225.6h1.9v-0.24h-1.9zM1223.31,225.6h1.9v-0.22h-1.9zM1225.75,225.6h1.9v-0.23h-1.9zM1228.19,225.6h1.9v-0.21h-1.9zM1230.62,225.6h1.9v-0.21h-1.9z" fill="#6b40b0"/>
<polyline points="729.50,225.60 731.94,225.47 734.37,225.35 736.81,225.21 739.25,225.08 741.69,224.97 744.12,224.85 746.56,224.63 749.00,224.42 751.44,224.18 753.87,223.85 756.31,223.66 758.75,223.36 761.18,223.16 763.62,222.89 766.06,222.72 768.50,222.38 770.93,222.08 773.37,221.91 775.81,221.31 778.25,220.79 780.68,220.44 783.12,219.56 785.56,218.49 787.99,217.51 790.43,216.55 792.87,214.94 795.31,212.87 797.74,210.34 800.18,207.99 802.62,206.23 805.05,204.04 807.49,202.81 809.93,200.29 812.37,198.86 814.80,196.05 817.24,194.14 819.68,193.66 822.12,191.67 824.55,189.58 826.99,186.00 829.43,185.47 831.86,183.23 834.30,184.35 836.74,184.65 839.18,185.27 841.61,183.74 844.05,184.74 846.49,186.70 848.93,188.58 851.36,192.27 853.80,195.71 856.24,199.82 858.67,203.40 861.11,207.44 863.55,211.35 865.99,214.24 868.42,216.71 870.86,218.61 873.30,220.59 875.74,221.71 878.17,222.28 880.61,222.63 883.05,223.14 885.48,223.51 887.92,223.54 890.36,223.43 892.80,223.38 895.23,223.10 897.67,222.58 900.11,222.25 902.55,221.91 904.98,221.48 907.42,220.98 909.86,220.63 912.29,220.56 914.73,220.07 917.17,219.95 919.61,219.28 922.04,218.91 924.48,218.17 926.92,217.60 929.35,217.31 931.79,216.54 934.23,216.50 936.67,216.46 939.10,216.00 941.54,216.16 943.98,215.90 946.42,215.61 948.85,215.42 951.29,215.64 953.73,215.65 956.16,215.08 958.60,215.52 961.04,215.27 963.48,215.45 965.91,215.90 968.35,215.99 970.79,216.23 973.23,216.53 975.66,216.93 978.10,217.32 980.54,217.66 982.97,217.89 985.41,218.46 987.85,218.86 990.29,219.12 992.72,219.68 995.16,220.02 997.60,220.18 1000.04,220.70 1002.47,221.07 1004.91,221.58 1007.35,221.86 1009.78,222.09 1012.22,222.45 1014.66,222.58 1017.10,222.82 1019.53,223.15 1021.97,223.31 1024.41,223.58 1026.85,223.80 1029.28,223.98 1031.72,224.09 1034.16,224.23 1036.59,224.43 1039.03,224.57 1041.47,224.68 1043.91,224.81 1046.34,224.98 1048.78,225.01 1051.22,225.04 1053.65,225.09 1056.09,225.12 1058.53,225.16 1060.97,225.20 1063.40,225.23 1065.84,225.27 1068.28,225.31 1070.72,225.34 1073.15,225.35 1075.59,225.35 1078.03,225.35 1080.46,225.36 1082.90,225.36 1085.34,225.35 1087.78,225.36 1090.21,225.37 1092.65,225.37 1095.09,225.36 1097.53,225.37 1099.96,225.37 1102.40,225.38 1104.84,225.37 1107.27,225.38 1109.71,225.37 1112.15,225.39 1114.59,225.39 1117.02,225.38 1119.46,225.38 1121.90,225.39 1124.34,225.40 1126.77,225.40 1129.21,225.40 1131.65,225.40 1134.08,225.40 1136.52,225.40 1138.96,225.41 1141.40,225.41 1143.83,225.41 1146.27,225.41 1148.71,225.41 1151.15,225.42 1153.58,225.42 1156.02,225.42 1158.46,225.42 1160.89,225.43 1163.33,225.43 1165.77,225.43 1168.21,225.43 1170.64,225.40 1173.08,225.36 1175.52,225.33 1177.95,225.30 1180.39,225.25 1182.83,225.22 1185.27,225.18 1187.70,225.16 1190.14,225.11 1192.58,225.08 1195.02,225.12 1197.45,225.14 1199.89,225.16 1202.33,225.19 1204.76,225.22 1207.20,225.25 1209.64,225.27 1212.08,225.30 1214.51,225.33 1216.95,225.34 1219.39,225.36 1221.83,225.36 1224.26,225.38 1226.70,225.37 1229.14,225.39 1231.57,225.39 1234.01,225.40 1236.45,225.41 1238.89,225.42 1241.32,225.44 1243.76,225.44 1246.20,225.45 1248.64,225.46 1251.07,225.46 1253.51,225.47 1255.95,225.48 1258.38,225.49 1260.82,225.50 1263.26,225.51 1265.70,225.52 1268.13,225.52 1270.57,225.52 1273.01,225.52 1275.45,225.53 1277.88,225.53 1280.32,225.53 1282.76,225.53 1285.19,225.54 1287.63,225.54 1290.07,225.54 1292.51,225.54 1294.94,225.54 1297.38,225.55 1299.82,225.55 1302.25,225.55 1304.69,225.56 1307.13,225.56 1309.57,225.56 1312.00,225.56 1314.44,225.56 1316.88,225.57 1319.32,225.57 1321.75,225.57 1324.19,225.57 1326.63,225.58 1329.06,225.58 1331.50,225.58 1333.94,225.58 1336.38,225.59 1338.81,225.59 1341.25,225.59 1343.69,225.59 1346.13,225.60 1348.56,225.60 1351.00,225.60" fill="none" stroke="#ff00ff" stroke-width="1.7" stroke-linejoin="round"/>
<text x="1030" y="287.8" font-size="8.3" fill="#595959" text-anchor="middle" textLength="58" lengthAdjust="spacingAndGlyphs">ROA Reflectance</text>
<rect x="960" y="302.3" width="5.6" height="6" fill="#2e9be0" stroke="#444" stroke-width="0.6"/>
<text x="968.8" y="308.3" font-size="8.3" fill="#595959" textLength="18.2" lengthAdjust="spacingAndGlyphs">ROI 1</text>
<rect x="994.8" y="302.3" width="5.6" height="6" fill="#8cc63f" stroke="#444" stroke-width="0.6"/>
<text x="1003.5999999999999" y="308.3" font-size="8.3" fill="#595959" textLength="18.2" lengthAdjust="spacingAndGlyphs">ROI 2</text>
<rect x="1029.6" y="302.3" width="5.6" height="6" fill="#f5a623" stroke="#444" stroke-width="0.6"/>
<text x="1038.3999999999999" y="308.3" font-size="8.3" fill="#595959" textLength="18.2" lengthAdjust="spacingAndGlyphs">ROI 3</text>
<rect x="1064.4" y="302.3" width="5.6" height="6" fill="#6a5acd" stroke="#444" stroke-width="0.6"/>
<text x="1073.2" y="308.3" font-size="8.3" fill="#595959" textLength="18.2" lengthAdjust="spacingAndGlyphs">ROI 4</text>
<line x1="717.5" y1="556.8" x2="1357.5" y2="556.8" stroke="#e3e3e3" stroke-width="1"/>
<text x="717" y="559.8" font-size="8.3" fill="#595959" text-anchor="end">0</text>
<line x1="717.5" y1="499.4" x2="1357.5" y2="499.4" stroke="#e3e3e3" stroke-width="1"/>
<text x="717" y="502.38352941176464" font-size="8.3" fill="#595959" text-anchor="end">63</text>
<line x1="717.5" y1="441.1" x2="1357.5" y2="441.1" stroke="#e3e3e3" stroke-width="1"/>
<text x="717" y="444.05568627450975" font-size="8.3" fill="#595959" text-anchor="end">127</text>
<line x1="717.5" y1="382.7" x2="1357.5" y2="382.7" stroke="#e3e3e3" stroke-width="1"/>
<text x="717" y="385.72784313725487" font-size="8.3" fill="#595959" text-anchor="end">191</text>
<line x1="717.5" y1="324.4" x2="1357.5" y2="324.4" stroke="#e3e3e3" stroke-width="1"/>
<text x="717" y="327.4" font-size="8.3" fill="#595959" text-anchor="end">255</text>
<line x1="720.5" y1="324.4" x2="720.5" y2="559.8" stroke="#e3e3e3" stroke-width="1"/>
<text x="720.5" y="568.7" font-size="8.3" fill="#595959" text-anchor="middle">Blue</text>
<line x1="879.8" y1="324.4" x2="879.8" y2="559.8" stroke="#e3e3e3" stroke-width="1"/>
<text x="879.8" y="568.7" font-size="8.3" fill="#595959" text-anchor="middle">Green</text>
<line x1="1039.0" y1="324.4" x2="1039.0" y2="559.8" stroke="#e3e3e3" stroke-width="1"/>
<text x="1039.0" y="568.7" font-size="8.3" fill="#595959" text-anchor="middle">Red</text>
<line x1="1198.2" y1="324.4" x2="1198.2" y2="559.8" stroke="#e3e3e3" stroke-width="1"/>
<text x="1198.2" y="568.7" font-size="8.3" fill="#595959" text-anchor="middle">Red-edge</text>
<line x1="1357.5" y1="324.4" x2="1357.5" y2="559.8" stroke="#e3e3e3" stroke-width="1"/>
<text x="1357.5" y="568.7" font-size="8.3" fill="#595959" text-anchor="middle">NIR</text>
<line x1="720.5" y1="324.4" x2="720.5" y2="559.8" stroke="#d0d0d0" stroke-width="1"/>
<polyline points="720.5,483.0 879.8,515.1 1039.0,556.6 1198.2,431.5 1357.5,324.4" fill="none" stroke="#8cc63f" stroke-width="1.3" stroke-linejoin="round"/>
<polyline points="720.5,522.0 879.8,556.3 1039.0,555.4 1198.2,466.1 1357.5,324.4" fill="none" stroke="#2e9be0" stroke-width="1.3" stroke-linejoin="round"/>
<polyline points="720.5,521.3 879.8,556.5 1039.0,555.0 1198.2,460.2 1357.5,324.4" fill="none" stroke="#f5a623" stroke-width="1.3" stroke-linejoin="round"/>
<rect x="34" y="608.5" width="65" height="11.5" fill="#fff" stroke="#a0a0a0" stroke-width="1"/>
<path d="M34.5,620 L34.5,608.5 L98.5,608.5" fill="none" stroke="#6a6a6a" stroke-width="1"/>
<path d="M88,610 L98,610 L98,619.5 L88,619.5" fill="none" stroke="#888" stroke-width="0.8"/>
<path d="M90.5,613 L95.5,613 L93,616 Z" fill="#222"/>
<text x="36" y="617.5" font-size="8.2" fill="#333" textLength="25" lengthAdjust="spacingAndGlyphs">English</text>
<rect x="107" y="604" width="93" height="21.5" fill="#579c50"/>
<path d="M107,625 L200,625 L200,604" fill="none" stroke="#3d6e3a" stroke-width="1"/>
<text x="153.5" y="618.5" font-size="10.5" fill="#fff" font-weight="bold" text-anchor="middle" textLength="45" lengthAdjust="spacingAndGlyphs">Open File</text>
<line x1="31" y1="633.5" x2="1375" y2="633.5" stroke="#c9cccc" stroke-width="1"/>
<circle cx="439.8" cy="614.3" r="3.9" fill="#f4f4f4" stroke="#7a7a7a" stroke-width="0.8"/>
<rect x="573" y="605" width="757" height="3" fill="#e2e5e5"/>
<line x1="576.5" y1="612" x2="576.5" y2="615" stroke="#aaa" stroke-width="0.8"/>
<line x1="764.5" y1="612" x2="764.5" y2="615" stroke="#aaa" stroke-width="0.8"/>
<line x1="951.4" y1="612" x2="951.4" y2="615" stroke="#aaa" stroke-width="0.8"/>
<line x1="1139.4" y1="612" x2="1139.4" y2="615" stroke="#aaa" stroke-width="0.8"/>
<line x1="1326.5" y1="612" x2="1326.5" y2="615" stroke="#aaa" stroke-width="0.8"/>
<path d="M1136.8,602 L1142.2,602 L1142.2,608.3 L1139.5,611.5 L1136.8,608.3 Z" fill="#55a050"/>
<text x="540.3" y="624.5" font-size="8.2" fill="#333" textLength="57" lengthAdjust="spacingAndGlyphs">Blue (475.0 nm)</text>
<text x="735.3" y="624.5" font-size="8.2" fill="#333" textLength="62.5" lengthAdjust="spacingAndGlyphs">Green (560.0 nm)</text>
<text x="936.5" y="624.5" font-size="8.2" fill="#333" textLength="55" lengthAdjust="spacingAndGlyphs">Red (668.0 nm)</text>
<text x="1129.2" y="624.5" font-size="8.2" fill="#333" textLength="51" lengthAdjust="spacingAndGlyphs">RE (717.0 nm)</text>
<text x="1317.6" y="624.5" font-size="8.2" fill="#333" textLength="55" lengthAdjust="spacingAndGlyphs">NIR (840.0 nm)</text>
<text x="1338.6" y="610" font-size="8.2" fill="#333" textLength="31.5" lengthAdjust="spacingAndGlyphs">717.0nm</text>
<rect x="33.5" y="643.5" width="75" height="70" fill="none" stroke="#8ec08e" stroke-width="1"/>
<rect x="136" y="643.5" width="288.5" height="70" fill="none" stroke="#8ec08e" stroke-width="1"/>
<rect x="38" y="647.6" width="66.5" height="17" fill="#0e6622"/>
<text x="71.3" y="659.2" font-size="8.6" fill="#fff" font-weight="bold" text-anchor="middle" textLength="26" lengthAdjust="spacingAndGlyphs">Manual</text>
<rect x="38" y="670" width="66.5" height="17" fill="#0e6622"/>
<text x="71.3" y="681.6" font-size="8.6" fill="#fff" font-weight="bold" text-anchor="middle" textLength="44.5" lengthAdjust="spacingAndGlyphs">Connect CAM</text>
<rect x="38" y="692" width="66.5" height="17" fill="#0e6622"/>
<text x="71.3" y="703.6" font-size="8.6" fill="#fff" font-weight="bold" text-anchor="middle" textLength="44.5" lengthAdjust="spacingAndGlyphs">Capture CAM</text>
<rect x="140.8" y="647.8" width="65.8" height="16.8" fill="#fff" stroke="#4f9a5a" stroke-width="1"/>
<text x="173.7" y="659.0" font-size="8.6" fill="#1f6a2a" font-weight="bold" text-anchor="middle" textLength="56" lengthAdjust="spacingAndGlyphs">Image Alignment</text>
<rect x="211.5" y="647.8" width="65.8" height="16.8" fill="#fff" stroke="#4f9a5a" stroke-width="1"/>
<text x="244.4" y="659.0" font-size="8.6" fill="#1f6a2a" font-weight="bold" text-anchor="middle" textLength="43" lengthAdjust="spacingAndGlyphs">Polygon ROI</text>
<rect x="283.0" y="647.8" width="65.8" height="16.8" fill="#fff" stroke="#4f9a5a" stroke-width="1"/>
<text x="315.9" y="659.0" font-size="8.6" fill="#1f6a2a" font-weight="bold" text-anchor="middle" textLength="45" lengthAdjust="spacingAndGlyphs">Freehand ROI</text>
<rect x="354.3" y="647.8" width="65.8" height="16.8" fill="#fff" stroke="#4f9a5a" stroke-width="1"/>
<text x="387.2" y="659.0" font-size="8.6" fill="#1f6a2a" font-weight="bold" text-anchor="middle" textLength="34" lengthAdjust="spacingAndGlyphs">Reset ROI</text>
<rect x="140.8" y="670.2" width="65.8" height="16.8" fill="#fff" stroke="#4f9a5a" stroke-width="1"/>
<text x="173.7" y="681.4000000000001" font-size="8.6" fill="#1f6a2a" font-weight="bold" text-anchor="middle" textLength="36" lengthAdjust="spacingAndGlyphs">Point ROA</text>
<rect x="211.5" y="670.2" width="65.8" height="16.8" fill="#fff" stroke="#4f9a5a" stroke-width="1"/>
<text x="244.4" y="681.4000000000001" font-size="8.6" fill="#1f6a2a" font-weight="bold" text-anchor="middle" textLength="51" lengthAdjust="spacingAndGlyphs">Rectangle ROA</text>
<rect x="283.0" y="670.2" width="65.8" height="16.8" fill="#fff" stroke="#4f9a5a" stroke-width="1"/>
<text x="315.9" y="681.4000000000001" font-size="8.6" fill="#1f6a2a" font-weight="bold" text-anchor="middle" textLength="46" lengthAdjust="spacingAndGlyphs">Polygon ROA</text>
<rect x="140.8" y="692.5" width="65.8" height="16.8" fill="#fff" stroke="#4f9a5a" stroke-width="1"/>
<text x="173.7" y="703.7" font-size="8.6" fill="#1f6a2a" font-weight="bold" text-anchor="middle" textLength="50" lengthAdjust="spacingAndGlyphs">Freehand ROA</text>
<rect x="211.5" y="692.5" width="65.8" height="16.8" fill="#fff" stroke="#4f9a5a" stroke-width="1"/>
<text x="244.4" y="703.7" font-size="8.6" fill="#1f6a2a" font-weight="bold" text-anchor="middle" textLength="37" lengthAdjust="spacingAndGlyphs">Reset ROA</text>
<rect x="283.0" y="692.5" width="65.8" height="16.8" fill="#fff" stroke="#4f9a5a" stroke-width="1"/>
<text x="315.9" y="703.7" font-size="8.6" fill="#1f6a2a" font-weight="bold" text-anchor="middle" textLength="38" lengthAdjust="spacingAndGlyphs">Develop VI</text>
<rect x="354.3" y="670.2" width="65.8" height="39" fill="#fff" stroke="#4f9a5a" stroke-width="1"/>
<text x="387.2" y="687.3" font-size="9.2" fill="#1f6a2a" font-weight="bold" text-anchor="middle" textLength="18.5" lengthAdjust="spacingAndGlyphs">Save</text>
<text x="387.2" y="699" font-size="9.2" fill="#1f6a2a" font-weight="bold" text-anchor="middle" textLength="57" lengthAdjust="spacingAndGlyphs">Current Image</text>
<rect x="431" y="645" width="108.5" height="11.6" fill="#b00000"/>
<circle cx="435" cy="650.5" r="3.9" fill="#f4f4f4" stroke="#7a7a7a" stroke-width="0.8"/>
<text x="443.4" y="653.6" font-size="8" fill="#fff" textLength="14" lengthAdjust="spacingAndGlyphs">RGB</text>
<circle cx="589.8" cy="650.5" r="3.9" fill="#f4f4f4" stroke="#7a7a7a" stroke-width="0.8"/>
<circle cx="589.8" cy="650.5" r="4.1" fill="#0a5fc0"/>
<circle cx="589.8" cy="650.5" r="1.5" fill="#fff"/>
<text x="598.7" y="653.6" font-size="8" fill="#222" textLength="21" lengthAdjust="spacingAndGlyphs">R+G+B</text>
<circle cx="435" cy="668.5" r="3.9" fill="#f4f4f4" stroke="#7a7a7a" stroke-width="0.8"/>
<text x="443.4" y="672.3" font-size="8" fill="#222" textLength="135" lengthAdjust="spacingAndGlyphs">Normalized Difference Vegetation Index</text>
<circle cx="589.8" cy="668.5" r="3.9" fill="#f4f4f4" stroke="#7a7a7a" stroke-width="0.8"/>
<text x="598.7" y="672.3" font-size="8" fill="#222" textLength="111" lengthAdjust="spacingAndGlyphs">Normalized Difference Red Edge</text>
<circle cx="742.5" cy="668.5" r="3.9" fill="#f4f4f4" stroke="#7a7a7a" stroke-width="0.8"/>
<text x="751.2" y="672.3" font-size="8" fill="#222" textLength="158" lengthAdjust="spacingAndGlyphs">Green Normalized Difference Vegetation Index</text>
<circle cx="920" cy="668.5" r="3.9" fill="#f4f4f4" stroke="#7a7a7a" stroke-width="0.8"/>
<text x="928.5" y="672.3" font-size="8" fill="#222" textLength="92.5" lengthAdjust="spacingAndGlyphs">Enhanced Vegetation Index</text>
<circle cx="1062" cy="668.5" r="3.9" fill="#f4f4f4" stroke="#7a7a7a" stroke-width="0.8"/>
<text x="1071" y="672.3" font-size="8" fill="#222" textLength="92" lengthAdjust="spacingAndGlyphs">Advanced Vegetation Index</text>
<circle cx="435" cy="686.6" r="3.9" fill="#f4f4f4" stroke="#7a7a7a" stroke-width="0.8"/>
<text x="443.4" y="690.4" font-size="8" fill="#222" textLength="103" lengthAdjust="spacingAndGlyphs">Soil Adjusted Vegetation Index</text>
<circle cx="589.8" cy="686.6" r="3.9" fill="#f4f4f4" stroke="#7a7a7a" stroke-width="0.8"/>
<text x="598.7" y="690.4" font-size="8" fill="#222" textLength="60" lengthAdjust="spacingAndGlyphs">Greenness Inxdex</text>
<circle cx="742.5" cy="686.6" r="3.9" fill="#f4f4f4" stroke="#7a7a7a" stroke-width="0.8"/>
<text x="751.2" y="690.4" font-size="8" fill="#222" textLength="83" lengthAdjust="spacingAndGlyphs">Green Chlorophyll Index</text>
<circle cx="920" cy="686.6" r="3.9" fill="#f4f4f4" stroke="#7a7a7a" stroke-width="0.8"/>
<text x="928.5" y="690.4" font-size="8" fill="#222" textLength="123" lengthAdjust="spacingAndGlyphs">Normalized Difference Glacier Index</text>
<circle cx="1062" cy="686.6" r="3.9" fill="#f4f4f4" stroke="#7a7a7a" stroke-width="0.8"/>
<text x="1071" y="690.4" font-size="8" fill="#222" textLength="145.5" lengthAdjust="spacingAndGlyphs">Atmospherically Resistant Vegetation Index</text>
<circle cx="435" cy="705.2" r="3.9" fill="#f4f4f4" stroke="#7a7a7a" stroke-width="0.8"/>
<text x="443.4" y="709.0" font-size="8" fill="#222" textLength="119.5" lengthAdjust="spacingAndGlyphs">Structure Insensitive Pigment Index</text>
<circle cx="589.8" cy="705.2" r="3.9" fill="#f4f4f4" stroke="#7a7a7a" stroke-width="0.8"/>
<text x="598.7" y="709.0" font-size="8" fill="#222" textLength="133" lengthAdjust="spacingAndGlyphs">Visible Atmospherically Resistant Index</text>
<circle cx="742.5" cy="705.2" r="3.9" fill="#f4f4f4" stroke="#7a7a7a" stroke-width="0.8"/>
<text x="751.2" y="709.0" font-size="8" fill="#222" textLength="15" lengthAdjust="spacingAndGlyphs">VI 13</text>
<circle cx="920" cy="705.2" r="3.9" fill="#f4f4f4" stroke="#7a7a7a" stroke-width="0.8"/>
<text x="928.5" y="709.0" font-size="8" fill="#222" textLength="15" lengthAdjust="spacingAndGlyphs">VI 14</text>
<circle cx="1062" cy="705.2" r="3.9" fill="#f4f4f4" stroke="#7a7a7a" stroke-width="0.8"/>
<text x="1071" y="709.0" font-size="8" fill="#222" textLength="15" lengthAdjust="spacingAndGlyphs">VI 15</text>
<rect x="1230.5" y="645.5" width="66" height="30.3" fill="#fff" stroke="#4f9a5a" stroke-width="1"/>
<text x="1263.5" y="657.5" font-size="9.2" fill="#1f6a2a" font-weight="bold" text-anchor="middle" textLength="8" lengthAdjust="spacingAndGlyphs">VI</text>
<text x="1263.5" y="669.3" font-size="9.2" fill="#1f6a2a" font-weight="bold" text-anchor="middle" textLength="23" lengthAdjust="spacingAndGlyphs">Boost</text>
<rect x="1230.5" y="681" width="66" height="30.3" fill="#fff" stroke="#4f9a5a" stroke-width="1"/>
<text x="1263.5" y="693.2" font-size="9.2" fill="#1f6a2a" font-weight="bold" text-anchor="middle" textLength="20" lengthAdjust="spacingAndGlyphs">Print</text>
<text x="1263.5" y="705" font-size="9.2" fill="#1f6a2a" font-weight="bold" text-anchor="middle" textLength="8" lengthAdjust="spacingAndGlyphs">VI</text>
<rect x="1301.5" y="645.5" width="66" height="65.8" fill="#fff" stroke="#4f9a5a" stroke-width="1"/>
<text x="1334.5" y="670.3" font-size="9.2" fill="#1f6a2a" font-weight="bold" text-anchor="middle" textLength="22" lengthAdjust="spacingAndGlyphs">Chart</text>
<text x="1334.5" y="694" font-size="9.2" fill="#1f6a2a" font-weight="bold" text-anchor="middle" textLength="29" lengthAdjust="spacingAndGlyphs">Output</text>
<path d="M46.5,738.4 A17.7,17.7 0 0 0 45.5,773.6 A18.9,18.9 0 0 1 46.5,738.4 Z" fill="#fff"/>
<circle cx="49.9" cy="738.2" r="3.1" fill="#fff"/>
<text x="50" y="760.6" font-size="17.2" fill="#ffffff" font-weight="bold" textLength="137.5" lengthAdjust="spacingAndGlyphs" stroke="#fff" stroke-width="0.7">ITCONVERGENCE</text>
<text x="50" y="769.9" font-size="6.8" fill="#dfeedd" textLength="128.5" lengthAdjust="spacingAndGlyphs">Information Technology Convergence Co., LTD</text>
<text x="214.3" y="752.6" font-size="8.4" fill="#f2f4e8" textLength="122.7" lengthAdjust="spacingAndGlyphs">Organization : ITConversion Co., Ltd.</text>
<text x="214.3" y="762" font-size="8.4" fill="#f2f4e8" textLength="223.6" lengthAdjust="spacingAndGlyphs">Address: 4th Floor, Jung-daero 312, Songpa-gu, Seoul, South Korea</text>
<path d="M1237.5,745.5 A14.2,14.2 0 0 1 1217.2,765.9" fill="none" stroke="#fff" stroke-width="1"/>
<path d="M1214.2,763.8 A14.2,14.2 0 0 1 1233.5,742" fill="none" stroke="#fff" stroke-width="1"/>
<circle cx="1235.8" cy="743.9" r="1.4" fill="none" stroke="#fff" stroke-width="0.9"/>
<circle cx="1215.9" cy="764.5" r="1.4" fill="none" stroke="#fff" stroke-width="0.9"/>
<path d="M1215.5,745.5 C1220,745 1226,747 1228,752 C1224,754 1218,752 1215.5,745.5 Z" fill="#fff"/>
<path d="M1237,749.5 C1236,756 1230,761 1222.5,761 C1223,755 1230,750 1237,749.5 Z" fill="#fff"/>
<path d="M1221,768 C1220.5,762 1223,757 1228,752.5" fill="none" stroke="#fff" stroke-width="1.1"/>
<rect x="1247" y="742" width="3.6" height="24.2" fill="#fff"/>
<text x="1251.5" y="766.2" font-size="23" fill="#ffffff" font-weight="bold" textLength="11.6" lengthAdjust="spacingAndGlyphs" stroke="#fff" stroke-width="0.3">s</text>
<path d="M1267.5,757.5 C1269,753.5 1273,751.5 1277.8,751.5 C1276.5,755.5 1272,757.5 1267.5,757.5 Z" fill="#fff"/>
<text x="1280.5" y="752" font-size="18.5" fill="#ffffff" font-weight="bold" textLength="69.5" lengthAdjust="spacingAndGlyphs">SSENSE</text>
<text x="1280.5" y="770" font-size="18.5" fill="#ffffff" font-weight="bold" textLength="96.5" lengthAdjust="spacingAndGlyphs">SPECTRAL</text>
<path d="M1357,751.5 C1358,746 1361,742 1364,740" fill="none" stroke="#fff" stroke-width="1"/>
<path d="M1355.5,743 C1357.5,743 1359,745 1358.5,748 C1356.5,747.5 1355.5,746 1355.5,743 Z" fill="#fff"/>
<path d="M1365.5,744.5 C1365.5,747 1363,749 1360,749 C1360.5,746.5 1362.5,745 1365.5,744.5 Z" fill="#fff"/>
<path d="M1360,738.5 C1361.5,739.5 1362,741.5 1361,743.5 C1359.5,742.5 1359,740.5 1360,738.5 Z" fill="#fff"/>
<path d="M1365,739.5 C1365,741.5 1364,742.5 1362,743 C1362.3,741 1363.3,740 1365,739.5 Z" fill="#fff"/>
<path d="M449.50,610.90 L449.50,614.70 L452.60,614.70 L452.60,610.90 M449.50,612.80 L452.60,612.80 M453.60,610.90 L453.60,615.10 M455.30,610.90 L455.30,615.50 M453.60,612.90 L455.30,612.90 M450.00,615.90 L450.00,618.10 L455.50,618.10" fill="none" stroke="#222" stroke-width="0.85"/>
<path d="M463.50,611.40 L458.30,611.40 L458.30,614.40 L463.50,614.40 M457.50,616.70 L464.30,616.70" fill="none" stroke="#222" stroke-width="0.85"/>
<ellipse cx="466.90" cy="612.80" rx="1.6" ry="1.5" fill="none" stroke="#222" stroke-width="0.85"/>
<ellipse cx="468.60" cy="616.90" rx="2.3" ry="1.3" fill="none" stroke="#222" stroke-width="0.85"/>
<path d="M470.80,610.90 L470.80,615.20 M468.90,612.00 L470.80,612.00 M468.90,613.70 L470.80,613.70" fill="none" stroke="#222" stroke-width="0.85"/>
<ellipse cx="476.30" cy="616.90" rx="2.3" ry="1.3" fill="none" stroke="#222" stroke-width="0.85"/>
<path d="M472.80,614.70 L474.70,610.90 L476.60,614.70 M478.40,610.90 L478.40,615.20 M478.40,612.90 L479.80,612.90" fill="none" stroke="#222" stroke-width="0.85"/>
<path d="M483.30,610.40 L482.20,610.40 L482.20,618.60 L483.30,618.60" fill="none" stroke="#555" stroke-width="0.85"/>
<path d="M484.20,611.40 L487.60,611.40 M485.90,611.40 L484.20,614.70 M485.90,612.40 L487.60,614.70 M489.80,610.90 L489.80,615.40 M488.30,613.00 L489.80,613.00 M485.00,615.90 L490.00,615.90 L490.00,618.50" fill="none" stroke="#222" stroke-width="0.85"/>
<path d="M491.90,610.90 L491.90,614.70 L494.70,614.70 L494.70,610.90 M491.90,612.80 L494.70,612.80 M497.40,610.90 L497.40,615.40 M495.70,612.10 L497.40,612.10 M495.70,613.80 L497.40,613.80 M492.50,615.90 L492.50,618.20 L498.00,618.20" fill="none" stroke="#222" stroke-width="0.85"/>
<ellipse cx="502.50" cy="617.00" rx="2.3" ry="1.3" fill="none" stroke="#222" stroke-width="0.85"/>
<path d="M499.20,611.30 L502.50,611.30 L502.50,613.40 M499.00,614.10 L503.60,614.10 M501.30,613.10 L501.30,614.10 M504.80,610.90 L504.80,615.30 M504.80,612.90 L506.00,612.90" fill="none" stroke="#222" stroke-width="0.85"/>
<path d="M507.60,610.40 L508.70,610.40 L508.70,618.60 L507.60,618.60" fill="none" stroke="#555" stroke-width="0.85"/></svg></body></html>
